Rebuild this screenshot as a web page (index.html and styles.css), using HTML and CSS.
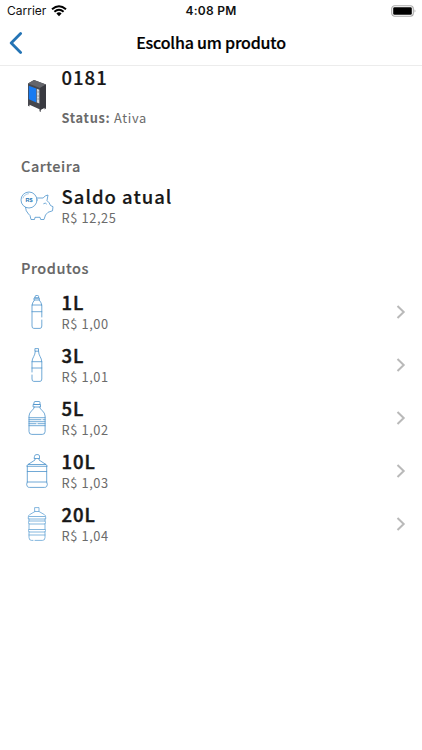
FILE: index.html
```
<!DOCTYPE html>
<html lang="pt-BR">
<head>
<meta charset="utf-8">
<title>Escolha um produto</title>
<link rel="stylesheet" href="styles.css">
</head>
<body>
<div class="status">
  <div class="carrier"><span>Carrier</span>
    <svg width="16" height="12" viewBox="0 0 16 12"><path d="M1 4.2Q8-1.8 15 4.2M3.4 6.7Q8 2.8 12.6 6.7" fill="none" stroke="#000" stroke-width="2"/><path d="M5.4 8.4Q8 6.2 10.6 8.4L8 11.2Z"/></svg>
  </div>
  <div class="time">4:08 PM</div>
  <svg class="battery" width="26" height="12" viewBox="0 0 26 12"><rect x=".7" y=".7" width="21.6" height="10.6" rx="3" fill="none" stroke="#aaa" stroke-width="1.1"/><rect x="2.2" y="2.2" width="18.6" height="7.6" rx="1.3"/><path d="M23.6 4.2Q25.4 6 23.6 7.8Z" fill="#999"/></svg>
</div>
<header class="nav">
  <svg class="back" width="14" height="22" viewBox="0 0 14 22"><path d="M11.6 1.6L2.2 11L11.6 20.4" fill="none" stroke="#2474b5" stroke-width="2.8" stroke-linecap="round" stroke-linejoin="round"/></svg>
  <h1>Escolha um produto</h1>
</header>
<main>
  <section class="row machine">
    <svg class="icon" width="34" height="36" viewBox="0 0 34 36"><path d="M8 5.5L14 2L26 6.5V30.5L24.5 31.5V29.8L20.8 31.7V34L19.5 33.3V31.3L9.5 26.8V28.5L8 27.8Z" fill="#46474d"/><path d="M8 5.5L14 2L26 6.5L20 10Z" fill="#64656b"/><path d="M20 10L26 6.5V29L20 32Z" fill="#393a41"/><path d="M8.8 7.8L16.3 10.6V24.5L8.8 21.2Z" fill="#187bf2"/><path d="M16.8 10.8L19.3 11.8V25.5L16.8 24.5Z" fill="#d5d9dd"/><path d="M17.3 14H19M17.3 18H19M17.3 21H19" stroke="#777" stroke-width=".7"/></svg>
    <div><h2>0181</h2><p><b>Status:</b> Ativa</p></div>
  </section>
  <h3 class="wallet-title">Carteira</h3>
  <section class="row wallet">
    <svg class="icon line" width="34" height="30" viewBox="0 0 34 30"><circle cx="9" cy="9" r="8"/><path d="M3 7Q4.5 3 8.5 2.7" stroke-width=".5"/><path d="M5.5 16.4Q5.5 20 8.5 23L10 24.5L11 28.5H14.5L15 26.3H20L20.7 28.5H24L25.5 24L28 21.3L32.5 19.8L33 15.7L30.5 14.5Q29.5 11.5 27 9.6L28 4Q25 4.2 23.2 7H17M23.7 12.6Q25.5 11.2 26.5 12.8"/><text x="9" y="11" text-anchor="middle">R$</text></svg>
    <div><h2>Saldo atual</h2><p>R$ 12,25</p></div>
  </section>
  <h3 class="products-title">Produtos</h3>
  <ul>
    <li class="row">
      <svg class="icon line" width="34" height="34" viewBox="0 0 34 34"><path d="M15.1 1.5Q15.1.5 16 .5H17.7Q18.6.5 18.6 1.5V3H15.1ZM14.4 3H19.3V5H14.4ZM14.4 5Q12 8 12 11V31Q12 33.4 13.8 33.4H20Q21.8 33.4 21.8 31V25M21.8 22V11Q21.8 8 19.3 5M12 10H21.8M12 16.7H21.8"/></svg>
      <div><h2>1L</h2><p>R$ 1,00</p></div>
      <svg class="chevron" width="10" height="14" viewBox="0 0 10 14"><path d="M1.5 1L7.7 7L1.5 13"/></svg>
    </li>
    <li class="row">
      <svg class="icon line" width="34" height="34" viewBox="0 0 34 34"><path d="M15.3.6H18.5V3.2H15.3ZM15.3 3.2C15.3 8 12 9.5 12 14V24M12 27V31Q12 33.4 13.8 33.4H20Q21.8 33.4 21.8 31V14C21.8 9.5 18.5 8 18.5 3.2M12 13.7H21.8M12 20H21.8"/></svg>
      <div><h2>3L</h2><p>R$ 1,01</p></div>
      <svg class="chevron" width="10" height="14" viewBox="0 0 10 14"><path d="M1.5 1L7.7 7L1.5 13"/></svg>
    </li>
    <li class="row">
      <svg class="icon line" width="34" height="34" viewBox="0 0 34 34"><path d="M14 1.5Q14 .5 15 .5H19Q20 .5 20 1.5V3.5H14ZM13.5 3.5H20.5V6H13.5ZM14.5 6C14 9 9 10.5 9 15V30.5Q9 33.4 11.8 33.4H22.3Q25.1 33.4 25.1 30.5V15C25.1 10.5 20 9 19.5 6M9 16.7H25.1M9 18.7H21M23 18.7H25.1M9 20.7H25.1M9 22.7H16M18 22.7H25.1M9 24.7H25.1"/></svg>
      <div><h2>5L</h2><p>R$ 1,02</p></div>
      <svg class="chevron" width="10" height="14" viewBox="0 0 10 14"><path d="M1.5 1L7.7 7L1.5 13"/></svg>
    </li>
    <li class="row">
      <svg class="icon line" width="34" height="34" viewBox="0 0 34 34"><path d="M14.5 2Q14.5.5 17 .5T19.5 2V4.5H14.5ZM15 4.5V6L8 10.5H26L19 6V4.5M8 10.5Q6.8 11 6.8 12.3H27.2Q27.2 11 26 10.5M7.3 12.3V28Q6 30.5 7.3 32.5Q8 33.4 9.5 33.4H24.5Q26 33.4 26.7 32.5Q28 30.5 26.7 28V12.3M7.3 17.5H26.7M7.3 28H26.7"/></svg>
      <div><h2>10L</h2><p>R$ 1,03</p></div>
      <svg class="chevron" width="10" height="14" viewBox="0 0 10 14"><path d="M1.5 1L7.7 7L1.5 13"/></svg>
    </li>
    <li class="row">
      <svg class="icon line pale" width="34" height="34" viewBox="0 0 34 34"><path d="M15 .6H19V4.5H15ZM15 4.5L9.5 7.7Q8.3 8.5 8.3 10V12H25.7V10Q25.7 8.5 24.5 7.7L19 4.5M9.3 9.5H24.7M9 12V14Q8 15.5 9 17H25Q26 15.5 25 14V12M9 14H25M9 17V22Q8 23.5 9 25H25Q26 23.5 25 22V17M9 22.5H25M9 25V30.5Q9 33.4 11.5 33.4H13M15 33.4H22.5Q25 33.4 25 30.5V25M9 28H25"/></svg>
      <div><h2>20L</h2><p>R$ 1,04</p></div>
      <svg class="chevron" width="10" height="14" viewBox="0 0 10 14"><path d="M1.5 1L7.7 7L1.5 13"/></svg>
    </li>
  </ul>
</main>
</body>
</html>
```
FILE: styles.css
```
* { box-sizing: border-box; margin: 0; padding: 0; }
body { width: 422px; height: 750px; overflow: hidden; background: #fff; color: #171717; font-family: "Noto Sans CJK SC", "Noto Sans", sans-serif; }
svg { display: block; flex: none; }
.status { height: 22px; display: grid; grid-template-columns: 1fr auto 1fr; align-items: center; padding: 0 5px 0 7px; font: 12px/22px Inter, sans-serif; color: #111; }
.carrier { display: flex; align-items: center; gap: 5px; }
.time { font-weight: 600; letter-spacing: .25px; position: relative; left: -1px; }
.battery { justify-self: end; }
.nav { height: 44px; display: grid; grid-template-columns: 28px 1fr 28px; align-items: center; border-bottom: 1px solid #ececec; }
.back { margin-left: 9px; margin-top: -2px; }
h1 { text-align: center; font-size: 16px; line-height: 24px; margin-top: -3px; font-weight: 500; letter-spacing: -.2px; color: #000; -webkit-text-stroke: .2px #000; }
main { padding: 0 16px 0 20px; }
.row { display: flex; align-items: flex-start; height: 53px; }
.row > div { flex: 1; margin-left: 7.5px; margin-top: -1px; }
.icon { margin-top: 4px; }
h2 { font-size: 18.5px; line-height: 24px; font-weight: 500; letter-spacing: 1px; white-space: nowrap; -webkit-text-stroke: .2px #171717; }
p { font-size: 12.8px; line-height: 18px; margin-top: 1px; color: #6b6b6b; letter-spacing: .62px; }
h3 { font-size: 14.5px; line-height: 22px; font-weight: 500; color: #666; letter-spacing: .55px; padding-left: 1px; -webkit-text-stroke: .15px #666; }
.machine { height: 90px; }
.machine .icon { margin-top: 12px; }
.machine p { margin-top: 20px; letter-spacing: .7px; }
.wallet { height: 73px; }
.wallet .icon { margin-top: 14px; }
.wallet div { padding-top: 8px; }
.wallet-title { height: 22px; margin-top: -1px; }
.products-title { height: 34px; margin-top: 7px; }
ul { list-style: none; }
ul h2 { -webkit-text-stroke: .45px #171717; }
.line { fill: none; stroke: #4c93cb; stroke-width: .8; stroke-linejoin: round; stroke-linecap: round; }
.pale { stroke: #66a5d6; }
.line text { font: 700 5.5px/1 "Liberation Sans", sans-serif; fill: #2474b5; stroke: none; }
.chevron { align-self: flex-start; margin-top: 14px; fill: none; stroke: #b9b9b9; stroke-width: 2; }
```
